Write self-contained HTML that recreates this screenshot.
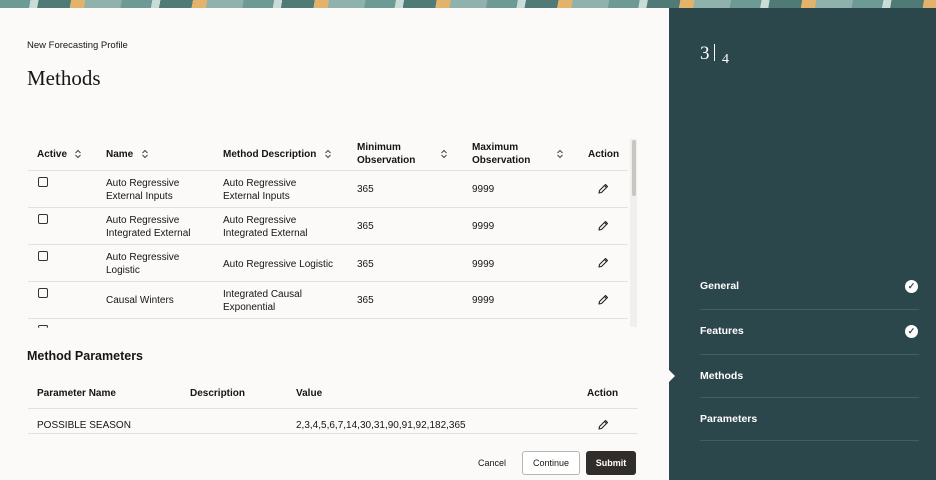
<!DOCTYPE html>
<html><head><style>
*{margin:0;padding:0;box-sizing:border-box}
body{width:936px;height:480px;overflow:hidden;background:#fbfaf9;font-family:"Liberation Sans",sans-serif;color:#161513;position:relative}
.banner{position:absolute;left:0;top:0;width:936px;height:8px;background:repeating-linear-gradient(100deg,#6e9a95 0 30px,#c9dcd8 30px 38px,#4f7a76 38px 70px,#e3b36c 70px 84px,#8fb2ad 84px 120px)}
.side{position:absolute;left:669px;top:8px;width:267px;height:472px;background:#2c474b;color:#fff}
.t{position:absolute;font-size:10px;line-height:13px}
.h{font-weight:bold;font-size:10px}
.line{position:absolute;height:1px;background:#e4e1dd}
.cb{position:absolute;width:10px;height:10px;border:1.3px solid #333;border-radius:2px}
.pen{position:absolute;width:12px;height:12px}
.sort{position:absolute;width:8px;height:10px}
.nav{position:absolute;left:31px;font-size:10.5px;font-weight:bold}
.navl{position:absolute;left:31px;width:219px;height:1px;background:#3f5f63}
.chk{position:absolute;left:236px;width:13px;height:13px;border-radius:50%;background:#fff;color:#2c474b;font-size:9px;text-align:center;line-height:13px;font-weight:bold}
</style></head><body>
<svg width="0" height="0" style="position:absolute">
<defs>
<symbol id="s" viewBox="0 0 8 10"><path d="M1.5 4 L4 1.5 L6.5 4 M1.5 6 L4 8.5 L6.5 6" fill="none" stroke="#444" stroke-width="1"/></symbol>
<symbol id="p" viewBox="0 0 12 12"><path d="M2 10 L2.5 7.5 L8.5 1.5 L10.5 3.5 L4.5 9.5 Z M7.5 2.5 L9.5 4.5" fill="none" stroke="#222" stroke-width="1.1" stroke-linejoin="round"/></symbol>
</defs></svg>
<div class="banner"></div>
<div class="t" style="left:27px;top:39px;font-size:9.5px">New Forecasting Profile</div>
<div style="position:absolute;left:27px;top:66px;font-family:'Liberation Serif',serif;font-size:21px">Methods</div>

<div class="t h" style="left:37px;top:148px">Active</div><svg class="sort" style="left:74px;top:149px"><use href="#s"/></svg>
<div class="t h" style="left:106px;top:148px">Name</div><svg class="sort" style="left:141px;top:149px"><use href="#s"/></svg>
<div class="t h" style="left:223px;top:148px">Method Description</div><svg class="sort" style="left:324px;top:149px"><use href="#s"/></svg>
<div class="t h" style="left:357px;top:141px">Minimum<br>Observation</div><svg class="sort" style="left:440px;top:149px"><use href="#s"/></svg>
<div class="t h" style="left:472px;top:141px">Maximum<br>Observation</div><svg class="sort" style="left:556px;top:149px"><use href="#s"/></svg>
<div class="t h" style="left:588px;top:148px">Action</div>
<div class="line" style="left:28px;top:170px;width:600px"></div>

<div class="cb" style="left:38px;top:177px"></div>
<div class="t" style="left:106px;top:177px">Auto Regressive<br>External Inputs</div>
<div class="t" style="left:223px;top:177px">Auto Regressive<br>External Inputs</div>
<div class="t" style="left:357px;top:183px">365</div><div class="t" style="left:472px;top:183px">9999</div>
<svg class="pen" style="left:597px;top:183px"><use href="#p"/></svg>
<div class="line" style="left:28px;top:207px;width:600px"></div>

<div class="cb" style="left:38px;top:214px"></div>
<div class="t" style="left:106px;top:214px">Auto Regressive<br>Integrated External</div>
<div class="t" style="left:223px;top:214px">Auto Regressive<br>Integrated External</div>
<div class="t" style="left:357px;top:220px">365</div><div class="t" style="left:472px;top:220px">9999</div>
<svg class="pen" style="left:597px;top:220px"><use href="#p"/></svg>
<div class="line" style="left:28px;top:244px;width:600px"></div>

<div class="cb" style="left:38px;top:251px"></div>
<div class="t" style="left:106px;top:251px">Auto Regressive<br>Logistic</div>
<div class="t" style="left:223px;top:258px">Auto Regressive Logistic</div>
<div class="t" style="left:357px;top:258px">365</div><div class="t" style="left:472px;top:258px">9999</div>
<svg class="pen" style="left:597px;top:257px"><use href="#p"/></svg>
<div class="line" style="left:28px;top:281px;width:600px"></div>

<div class="cb" style="left:38px;top:288px"></div>
<div class="t" style="left:106px;top:294px">Causal Winters</div>
<div class="t" style="left:223px;top:288px">Integrated Causal<br>Exponential</div>
<div class="t" style="left:357px;top:294px">365</div><div class="t" style="left:472px;top:294px">9999</div>
<svg class="pen" style="left:597px;top:294px"><use href="#p"/></svg>
<div class="line" style="left:28px;top:318px;width:600px"></div>
<div class="cb" style="left:38px;top:325px;height:3px;border-bottom:none"></div>
<div style="position:absolute;left:630px;top:139px;width:7px;height:188px;background:#f1efed"></div>
<div style="position:absolute;left:632px;top:140px;width:4px;height:56px;border-radius:2px;background:#c9c6c2"></div>

<div class="t" style="left:27px;top:350px;font-size:12.5px;font-weight:bold">Method Parameters</div>
<div class="t h" style="left:37px;top:387px">Parameter Name</div>
<div class="t h" style="left:190px;top:387px">Description</div>
<div class="t h" style="left:296px;top:387px">Value</div>
<div class="t h" style="left:587px;top:387px">Action</div>
<div class="line" style="left:28px;top:408px;width:610px"></div>
<div class="t" style="left:37px;top:419px">POSSIBLE SEASON</div>
<div class="t" style="left:296px;top:419px">2,3,4,5,6,7,14,30,31,90,91,92,182,365</div>
<svg class="pen" style="left:597px;top:419px"><use href="#p"/></svg>
<div class="line" style="left:28px;top:433px;width:610px"></div>

<div class="t" style="left:478px;top:457px;font-size:9px">Cancel</div>
<div style="position:absolute;left:522px;top:451px;width:58px;height:24px;border:1px solid #b9b6b2;border-radius:3px;font-size:9px;text-align:center;line-height:22px;background:#fff">Continue</div>
<div style="position:absolute;left:586px;top:451px;width:50px;height:24px;background:#312d2a;color:#fff;border-radius:3px;font-size:9px;font-weight:bold;text-align:center;line-height:24px">Submit</div>

<div class="side">
<div style="position:absolute;left:31px;top:35px;font-family:'Liberation Serif',serif;font-size:19px">3</div>
<div style="position:absolute;left:45px;top:36px;width:1px;height:17px;background:#fff"></div>
<div style="position:absolute;left:53px;top:44px;font-family:'Liberation Serif',serif;font-size:14px">4</div>
<div class="nav" style="top:272px">General</div><div class="chk" style="top:272px">✓</div>
<div class="navl" style="top:301px"></div>
<div class="nav" style="top:317px">Features</div><div class="chk" style="top:317px">✓</div>
<div class="navl" style="top:346px"></div>
<div class="nav" style="top:362px">Methods</div>
<div class="navl" style="top:389px"></div>
<div class="nav" style="top:405px">Parameters</div>
<div class="navl" style="top:432px"></div>
<div style="position:absolute;left:0;top:362px;border-left:6px solid #fbfaf9;border-top:6px solid transparent;border-bottom:6px solid transparent"></div>
</div>
</body></html>
